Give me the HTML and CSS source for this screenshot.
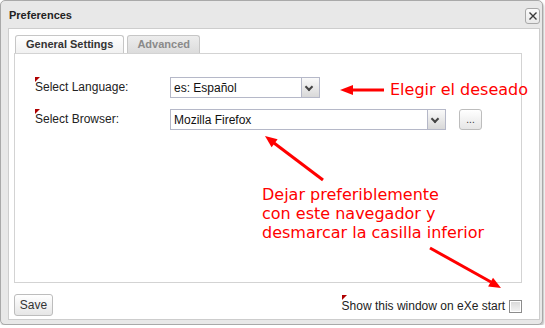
FILE: index.html
```html
<!DOCTYPE html>
<html lang="es">
<head>
    <meta charset="UTF-8">
    <title>Preferences</title>
    <link rel="stylesheet" href="styles.css">
</head>
<body>
    <div class="window">
        <!-- cabecera -->
        <div class="titlebar">
            <span class="title">Preferences</span>
            <span class="close">
                <svg width="8" height="8" viewBox="0 0 8 8"><path d="M0.5 0.5 L7.5 7.5 M7.5 0.5 L0.5 7.5" stroke="#3a3a3a" stroke-width="1.4" fill="none"/></svg>
            </span>
        </div>

        <div class="content">
            <div class="tabs">
                <div class="tab active">General Settings</div>
                <div class="tab">Advanced</div>
            </div>

            <div class="tabpanel">
                <div class="row">
                    <label class="label dirty">Select Language:</label>
                    <div class="combo lang">
                        <span class="combo-text">es: Español</span>
                        <span class="trigger"></span>
                    </div>
                </div>
                <div class="row">
                    <label class="label dirty">Select Browser:</label>
                    <div class="combo browser">
                        <span class="combo-text">Mozilla Firefox</span>
                        <span class="trigger"></span>
                    </div>
                    <button class="btn dots">...</button>
                </div>
            </div>

            <div class="footer">
                <button class="btn save">Save</button>
                <label class="check-row">
                    <span class="dirty">Show this window on eXe start</span>
                    <span class="checkbox"></span>
                </label>
            </div>
        </div>

        <!-- anotaciones -->
        <svg class="arrows" width="545" height="328" viewBox="0 0 545 328">
            <g fill="#ff0000" stroke="#ff0000">
                <line x1="384" y1="90" x2="350" y2="90" stroke-width="3"/>
                <polygon points="340,90 353,85 353,95" stroke="none"/>

                <line x1="323" y1="180" x2="274" y2="143" stroke-width="3"/>
                <polygon points="265,136 277.6,139.2 271.6,147.2" stroke="none"/>

                <line x1="430" y1="248" x2="491" y2="282" stroke-width="3"/>
                <polygon points="501,288 488.1,286.5 493,277.7" stroke="none"/>
            </g>
        </svg>
        <div class="note note-choose">Elegir el deseado</div>
        <div class="note note-browser">Dejar preferiblemente<br>con este navegador y<br>desmarcar la casilla inferior</div>
    </div>
</body>
</html>
```

FILE: styles.css
```css
body {
    margin: 0;
    background: #fff;
    font-family: 'Liberation Sans', Arial, sans-serif;
    font-size: 12px;
    color: #222;
}

/* ventana */
.window {
    position: relative;
    width: 543px;
    height: 325px;
    box-sizing: border-box;
    border: 1px solid #a9a9a9;
    border-radius: 5px;
    background: #e8e8e8;
    box-shadow: 1px 2px 2px rgba(0,0,0,0.25);
}

.titlebar {
    height: 27px;
    display: flex;
    align-items: center;
    justify-content: space-between;
    padding: 0 2px 0 8px;
}

.title {
    font-size: 11px;
    font-weight: bold;
    color: #222;
}

.close {
    width: 13px;
    height: 14px;
    border: 1px solid #a8a8a8;
    border-radius: 3px;
    background: linear-gradient(#fbfbfb, #e9e9e9);
    display: flex;
    align-items: center;
    justify-content: center;
    margin-top: 2px;
}

/* panel blanco */
.content {
    margin-left: 7px;
    width: 532px;
    height: 292px;
    box-sizing: border-box;
    border: 1px solid #cdcdcd;
    background: #fff;
    padding: 6px 17px 0 5px;
}

/* pestañas */
.tabs {
    display: flex;
    gap: 3px;
    padding-left: 1px;
    height: 18px;
}

.tab {
    font-size: 11px;
    font-weight: bold;
    line-height: 17px;
    padding: 0 9px;
    border: 1px solid #c6c6c6;
    border-bottom: none;
    border-radius: 3px 3px 0 0;
    background: linear-gradient(#ededed, #dcdcdc);
    color: #8a8a8a;
}

.tab.active {
    background: linear-gradient(#ffffff, #f1f1f1);
    color: #333;
    padding: 0 10px;
}

.tabpanel {
    height: 230px;
    box-sizing: border-box;
    border: 1px solid #d3d3d3;
    padding: 23px 0 0 20px;
    display: flex;
    flex-direction: column;
    gap: 11px;
}

.row {
    display: flex;
    align-items: center;
    height: 21px;
}

.label {
    width: 135px;
    line-height: 21px;
    color: #222;
}

/* marca roja de campo modificado */
.dirty {
    position: relative;
}

.dirty::before {
    content: "";
    position: absolute;
    left: 0;
    top: 0;
    border-style: solid;
    border-width: 5px 5px 0 0;
    border-color: #b00000 transparent transparent transparent;
}

/* combos */
.combo {
    height: 21px;
    box-sizing: border-box;
    border: 1px solid #b5b8c8;
    background: #fff;
    display: flex;
    align-items: center;
    justify-content: space-between;
}

.combo.lang { width: 150px; }
.combo.browser { width: 276px; }

.combo-text {
    padding-left: 3px;
    font-size: 12px;
    color: #111;
}

.trigger {
    width: 17px;
    height: 19px;
    border-left: 1px solid #b5b8c8;
    background: linear-gradient(#fafafa, #d8d8d8);
    position: relative;
}

.trigger::after {
    content: "";
    position: absolute;
    left: 4px;
    top: 6px;
    width: 4px;
    height: 4px;
    border-right: 2px solid #444;
    border-bottom: 2px solid #444;
    transform: rotate(45deg);
}

.btn {
    font-family: 'Liberation Sans', Arial, sans-serif;
    font-size: 12px;
    color: #333;
    border: 1px solid #bdbdbd;
    border-radius: 3px;
    background: linear-gradient(#ffffff, #e6e6e6);
    padding: 0;
}

.btn.dots {
    width: 23px;
    height: 21px;
    margin-left: 13px;
    font-size: 10px;
    line-height: 14px;
}

/* pie */
.footer {
    display: flex;
    align-items: center;
    justify-content: space-between;
    padding-top: 11px;
}

.btn.save {
    width: 39px;
    height: 22px;
}

.check-row {
    display: flex;
    align-items: center;
    gap: 4px;
    margin-top: 2px;
}

.check-row .dirty::before {
    top: -4px;
}

.checkbox {
    width: 11px;
    height: 11px;
    border: 1px solid #8c8c8c;
    box-shadow: inset 0 0 0 1px #fff;
    background: linear-gradient(#d8d8d8, #f4f4f4);
}

/* anotaciones */
.arrows {
    position: absolute;
    left: -1px;
    top: -1px;
    pointer-events: none;
}

.note {
    position: absolute;
    font-family: 'DejaVu Sans', sans-serif;
    font-size: 16px;
    line-height: 19px;
    color: #ff0000;
    white-space: nowrap;
}

.note-choose {
    left: 389px;
    top: 79px;
}

.note-browser {
    left: 261px;
    top: 184px;
}
```
